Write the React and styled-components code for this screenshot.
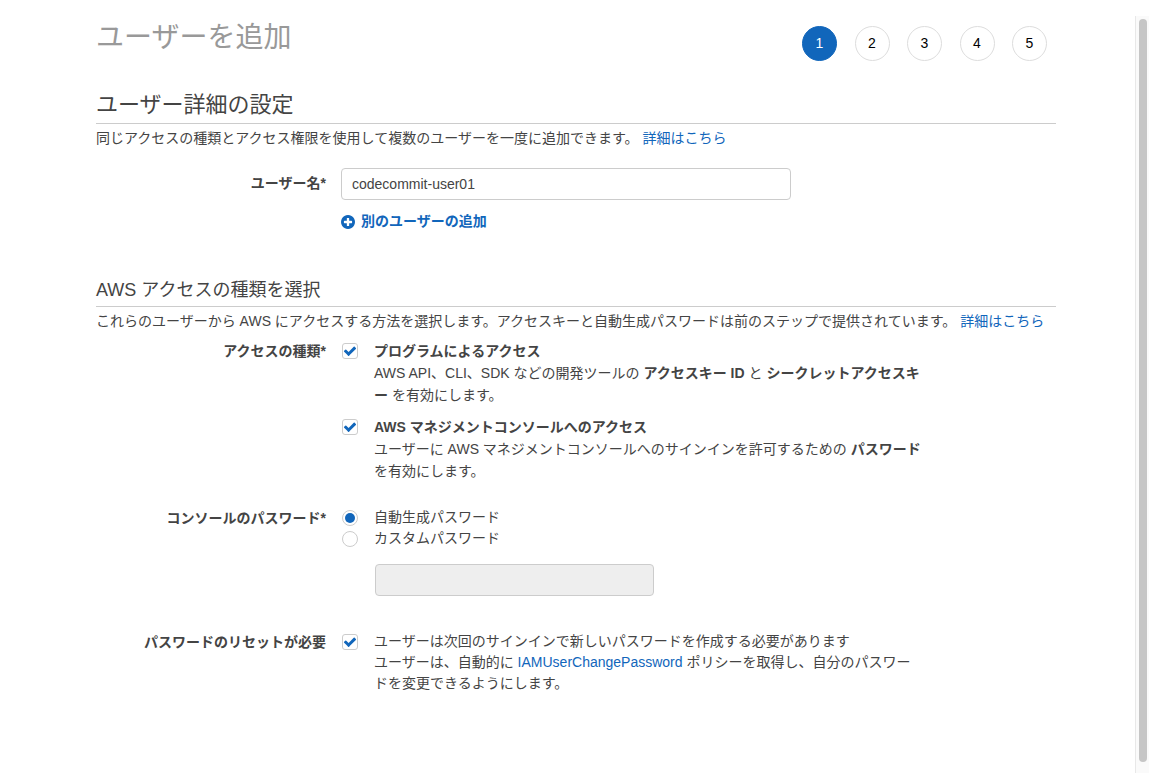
import React, { useState } from "react";
import styled, { createGlobalStyle } from "styled-components";

const GlobalStyle = createGlobalStyle`
  * {
    box-sizing: border-box;
  }

  body {
    margin: 0;
    background: #fff;
    color: #444;
    font-family: "Liberation Sans", "Noto Sans CJK JP", sans-serif;
    font-size: 14px;
    line-height: 21px;
  }
`;

const Page = styled.div`
  display: flex;
  min-height: 100vh;
`;

const Main = styled.main`
  flex: 1;
  padding: 18px 79px 48px 96px;
`;

const ScrollTrack = styled.div`
  display: flex;
  width: 14px;
  margin-top: 16px;
  padding: 3px 2px 11px 3px;
  background: #fafafa;
  border-left: 1px solid #e8e8e8;
`;

const ScrollThumb = styled.div`
  flex: 1;
  border-radius: 4px;
  background: #c6c6c6;
`;

const Header = styled.header`
  display: flex;
  justify-content: space-between;
  align-items: flex-start;
  padding-right: 9px;
`;

const Title = styled.h1`
  margin: 0;
  color: #999;
  font-size: 28px;
  font-weight: 400;
  line-height: 40px;
`;

const Steps = styled.ol`
  display: flex;
  justify-content: space-between;
  width: 245px;
  margin: 8px 0 0;
  padding: 0;
  list-style: none;
`;

const Step = styled.li`
  display: flex;
  align-items: center;
  justify-content: center;
  width: 35px;
  height: 35px;
  border: 1px solid ${({ $active }) => ($active ? "#1166bb" : "#ddd")};
  border-radius: 50%;
  background: ${({ $active }) => ($active ? "#1166bb" : "#fff")};
  color: ${({ $active }) => ($active ? "#fff" : "#000")};
`;

const Section = styled.section`
  margin-top: ${({ $gap }) => $gap}px;
`;

const Heading = styled.h2`
  margin: 0 0 4px;
  padding-bottom: ${({ $small }) => ($small ? 2 : 4)}px;
  border-bottom: 1px solid #ccc;
  font-size: ${({ $small }) => ($small ? 18 : 22)}px;
  font-weight: 400;
  line-height: 28px;
`;

const Text = styled.p`
  margin: 0;
`;

const Link = styled.a`
  color: #1166bb;
  text-decoration: none;

  &:hover {
    text-decoration: underline;
  }
`;

const Row = styled.div`
  display: grid;
  grid-template-columns: 230px minmax(0, 581px);
  column-gap: 15px;
  margin-top: ${({ $gap }) => $gap}px;
`;

const RowLabel = styled.div`
  padding-top: ${({ $inset }) => ($inset ? 4 : 0)}px;
  font-weight: 700;
  line-height: 22px;
  text-align: right;
`;

const Field = styled.input`
  display: block;
  width: 100%;
  max-width: ${({ $width }) => $width}px;
  height: 32px;
  padding: 0 10px;
  border: 1px solid #ccc;
  border-radius: 4px;
  background: #fff;
  color: #444;
  font: inherit;

  &:disabled {
    margin: 15px 0 0 34px;
    background: #eee;
  }
`;

const AddButton = styled.button`
  display: flex;
  align-items: center;
  gap: 6px;
  margin-top: 11px;
  padding: 0;
  border: 0;
  background: none;
  color: #1166bb;
  font: inherit;
  font-weight: 700;
  cursor: pointer;

  svg {
    width: 14px;
    height: 14px;
  }
`;

const Options = styled.div`
  display: flex;
  flex-direction: column;
  gap: ${({ $gap }) => $gap || 0}px;
`;

const Option = styled.div`
  display: grid;
  grid-template-columns: 18px minmax(0, 1fr);
  column-gap: 15px;
  line-height: ${({ $loose }) => ($loose ? 22 : 21)}px;
  line-break: loose;
`;

const Box = styled.span`
  display: grid;
  place-items: center;
  width: 16px;
  height: 16px;
  margin: 3px 0 0 1px;

  input,
  svg {
    grid-area: 1 / 1;
  }

  svg {
    width: 14px;
    height: 14px;
    color: #1166bb;
    pointer-events: none;
  }
`;

const CheckInput = styled.input`
  appearance: none;
  width: 16px;
  height: 16px;
  margin: 0;
  border: 1px solid #ccc;
  border-radius: 3px;
  background: #fff;

  &:not(:checked) + svg {
    visibility: hidden;
  }
`;

const RadioInput = styled.input`
  appearance: none;
  display: grid;
  place-items: center;
  width: 16px;
  height: 16px;
  margin: 0;
  border: 1px solid #ccc;
  border-radius: 50%;
  background: #fff;

  &:checked::before {
    content: "";
    width: 10px;
    height: 10px;
    border-radius: 50%;
    background: #1166bb;
  }
`;

const OptionLabel = styled.label`
  display: block;
  font-weight: ${({ $bold }) => ($bold ? 700 : 400)};
`;

function CheckIcon() {
  return (
    <svg viewBox="0 0 1792 1792" fill="currentColor" aria-hidden="true">
      <path d="M1671 566q0 40-28 68l-724 724-136 136q-28 28-68 28t-68-28l-136-136-362-362q-28-28-28-68t28-68l136-136q28-28 68-28t68 28l294 295 656-657q28-28 68-28t68 28l136 136q28 28 28 68z" />
    </svg>
  );
}

function PlusCircleIcon() {
  return (
    <svg viewBox="128 128 1536 1536" fill="currentColor" aria-hidden="true">
      <path d="M1344 960v-128q0-26-19-45t-45-19h-256v-256q0-26-19-45t-45-19h-128q-26 0-45 19t-19 45v256h-256q-26 0-45 19t-19 45v128q0 26 19 45t45 19h256v256q0 26 19 45t45 19h128q26 0 45-19t19-45v-256h256q26 0 45-19t19-45zm320-64q0 209-103 385.5t-279.5 279.5-385.5 103-385.5-103-279.5-279.5-103-385.5 103-385.5 279.5-279.5 385.5-103 385.5 103 279.5 279.5 103 385.5z" />
    </svg>
  );
}

function CheckOption({ id, label, bold, loose, children }) {
  return (
    <Option $loose={loose}>
      <Box>
        <CheckInput type="checkbox" id={id} defaultChecked />
        <CheckIcon />
      </Box>
      <div>
        <OptionLabel htmlFor={id} $bold={bold}>
          {label}
        </OptionLabel>
        <Text>{children}</Text>
      </div>
    </Option>
  );
}

function RadioOption({ id, label, checked, onChange }) {
  return (
    <Option>
      <Box>
        <RadioInput
          type="radio"
          name="password"
          id={id}
          checked={checked}
          onChange={onChange}
        />
      </Box>
      <OptionLabel htmlFor={id}>{label}</OptionLabel>
    </Option>
  );
}

export default function App() {
  const [password, setPassword] = useState("auto");

  return (
    <>
      <GlobalStyle />
      <Page>
        <Main>
          <Header>
            <Title>ユーザーを追加</Title>
            <Steps>
              {[1, 2, 3, 4, 5].map((step) => (
                <Step key={step} $active={step === 1}>
                  {step}
                </Step>
              ))}
            </Steps>
          </Header>

          <Section $gap={30}>
            <Heading>ユーザー詳細の設定</Heading>
            <Text>
              同じアクセスの種類とアクセス権限を使用して複数のユーザーを一度に追加できます。{" "}
              <Link href="#users">詳細はこちら</Link>
            </Text>
            <Row $gap={19}>
              <RowLabel as="label" htmlFor="username" $inset>
                ユーザー名*
              </RowLabel>
              <div>
                <Field
                  id="username"
                  type="text"
                  defaultValue="codecommit-user01"
                  $width={450}
                />
                <AddButton type="button">
                  <PlusCircleIcon />
                  別のユーザーの追加
                </AddButton>
              </div>
            </Row>
          </Section>

          <Section $gap={44}>
            <Heading $small>AWS アクセスの種類を選択</Heading>
            <Text>
              これらのユーザーから AWS
              にアクセスする方法を選択します。アクセスキーと自動生成パスワードは前のステップで提供されています。{" "}
              <Link href="#access">詳細はこちら</Link>
            </Text>
            <Row $gap={8} role="group" aria-labelledby="access-type">
              <RowLabel id="access-type">アクセスの種類*</RowLabel>
              <Options $gap={10}>
                <CheckOption
                  id="programmatic"
                  label="プログラムによるアクセス"
                  bold
                  loose
                >
                  AWS API、CLI、SDK などの開発ツールの <b>アクセスキー ID</b> と{" "}
                  <b>シークレットアクセスキー</b> を有効にします。
                </CheckOption>
                <CheckOption
                  id="console"
                  label="AWS マネジメントコンソールへのアクセス"
                  bold
                  loose
                >
                  ユーザーに AWS マネジメントコンソールへのサインインを許可するための{" "}
                  <b>パスワード</b> を有効にします。
                </CheckOption>
              </Options>
            </Row>
            <Row $gap={25} role="radiogroup" aria-labelledby="console-password">
              <RowLabel id="console-password">コンソールのパスワード*</RowLabel>
              <Options>
                <RadioOption
                  id="auto"
                  label="自動生成パスワード"
                  checked={password === "auto"}
                  onChange={() => setPassword("auto")}
                />
                <RadioOption
                  id="custom"
                  label="カスタムパスワード"
                  checked={password === "custom"}
                  onChange={() => setPassword("custom")}
                />
                <Field
                  type="password"
                  aria-label="カスタムパスワード"
                  disabled
                  $width={279}
                />
              </Options>
            </Row>
            <Row $gap={35}>
              <RowLabel as="label" htmlFor="reset">
                パスワードのリセットが必要
              </RowLabel>
              <CheckOption
                id="reset"
                label="ユーザーは次回のサインインで新しいパスワードを作成する必要があります"
              >
                ユーザーは、自動的に <Link href="#policy">IAMUserChangePassword</Link>{" "}
                ポリシーを取得し、自分のパスワードを変更できるようにします。
              </CheckOption>
            </Row>
          </Section>
        </Main>
        <ScrollTrack>
          <ScrollThumb />
        </ScrollTrack>
      </Page>
    </>
  );
}
